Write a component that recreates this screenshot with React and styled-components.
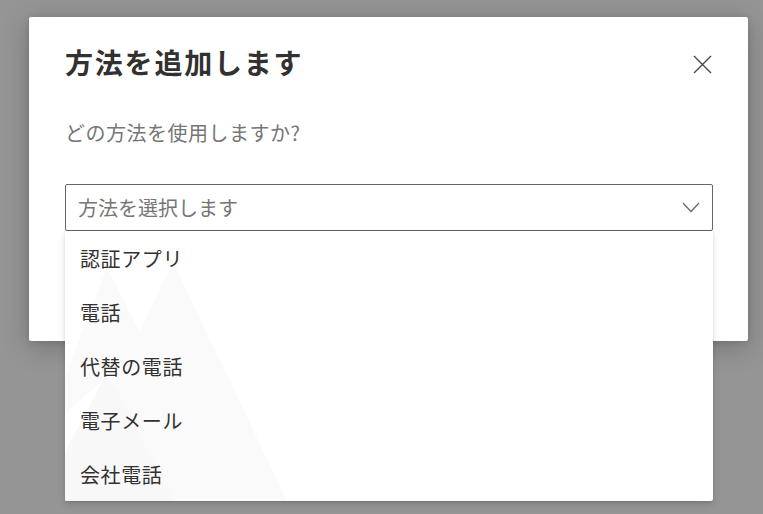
import React from "react";
import styled, { createGlobalStyle } from "styled-components";

const GlobalStyle = createGlobalStyle`
  html, body {
    margin: 0;
    padding: 0;
    background: #959595;
    overflow: hidden;
  }
  body {
    font-family: "Noto Sans CJK JP", "Noto Sans", sans-serif;
  }
`;

const Backdrop = styled.div`
  width: 763px;
  height: 514px;
  padding: 17px 0 0 29px;
  box-sizing: border-box;
  background: #959595;
`;

const Dialog = styled.div`
  width: 719px;
  height: 324px;
  box-sizing: border-box;
  padding: 27px 35px 0 36px;
  background: #ffffff;
  border-radius: 2px;
  box-shadow: 0 6px 28px rgba(0, 0, 0, 0.22), 0 1px 6px rgba(0, 0, 0, 0.12);
  display: flex;
  flex-direction: column;
`;

const Header = styled.div`
  display: flex;
  align-items: flex-start;
  justify-content: space-between;
`;

const Title = styled.h1`
  margin: 0;
  font-size: 28px;
  line-height: 36px;
  font-weight: 700;
  letter-spacing: 1.8px;
  color: #323130;
`;

const CloseButton = styled.button`
  border: none;
  background: transparent;
  padding: 0;
  margin-top: 11px;
  margin-right: 1px;
  width: 19px;
  height: 19px;
  display: flex;
  cursor: pointer;
`;

const Question = styled.p`
  margin: 39px 0 0 0;
  font-size: 20px;
  line-height: 28px;
  color: #767676;
  letter-spacing: 0.5px;
`;

const SelectWrap = styled.div`
  position: relative;
  margin-top: 37px;
`;

const SelectBox = styled.div`
  height: 47px;
  box-sizing: border-box;
  border: 1px solid #666666;
  border-radius: 2px;
  padding: 0 12px 0 12px;
  display: flex;
  align-items: center;
  justify-content: space-between;
`;

const Placeholder = styled.span`
  font-size: 20px;
  line-height: 28px;
  color: #767676;
`;

const Menu = styled.ul`
  position: absolute;
  top: 100%;
  left: 0;
  right: 0;
  margin: 0;
  padding: 0;
  list-style: none;
  background: #ffffff;
  border-radius: 0 0 2px 2px;
  box-shadow: 0 3.2px 7.2px rgba(0, 0, 0, 0.13), 0 0.6px 1.8px rgba(0, 0, 0, 0.11);
  overflow: hidden;
  z-index: 2;
`;

const MenuArt = styled.svg`
  position: absolute;
  left: 0;
  top: 0;
  pointer-events: none;
`;

const MenuItem = styled.li`
  position: relative;
  height: 54px;
  display: flex;
  align-items: center;
  padding-left: 15px;
  font-size: 20px;
  letter-spacing: 0.6px;
  color: #323130;
`;

function CloseIcon() {
  return (
    <svg width="19" height="19" viewBox="0 0 19 19">
      <path d="M1 1 L18 18 M18 1 L1 18" stroke="#4a4a4a" strokeWidth="1.4" fill="none" />
    </svg>
  );
}

function Chevron() {
  return (
    <svg width="18" height="11" viewBox="0 0 18 11">
      <path d="M1 1 L9 9.5 L17 1" stroke="#666666" strokeWidth="1.2" fill="none" />
    </svg>
  );
}

const items = ["認証アプリ", "電話", "代替の電話", "電子メール", "会社電話"];

export default function App() {
  return (
    <>
      <GlobalStyle />
      <Backdrop>
        <Dialog>
          <Header>
            <Title>方法を追加します</Title>
            <CloseButton aria-label="閉じる">
              <CloseIcon />
            </CloseButton>
          </Header>
          <Question>どの方法を使用しますか?</Question>
          <SelectWrap>
            <SelectBox>
              <Placeholder>方法を選択します</Placeholder>
              <Chevron />
            </SelectBox>
            <Menu>
              <MenuArt width="648" height="270" viewBox="0 0 648 270">
                <polygon points="108,31 222,270 -6,270" fill="#fafafa" />
                <polygon points="42,36 80,112 -20,200" fill="#fafafa" />
                <polygon points="42,142 110,270 -26,270" fill="#f8f8f8" />
              </MenuArt>
              {items.map((t) => (
                <MenuItem key={t}>{t}</MenuItem>
              ))}
            </Menu>
          </SelectWrap>
        </Dialog>
      </Backdrop>
    </>
  );
}
